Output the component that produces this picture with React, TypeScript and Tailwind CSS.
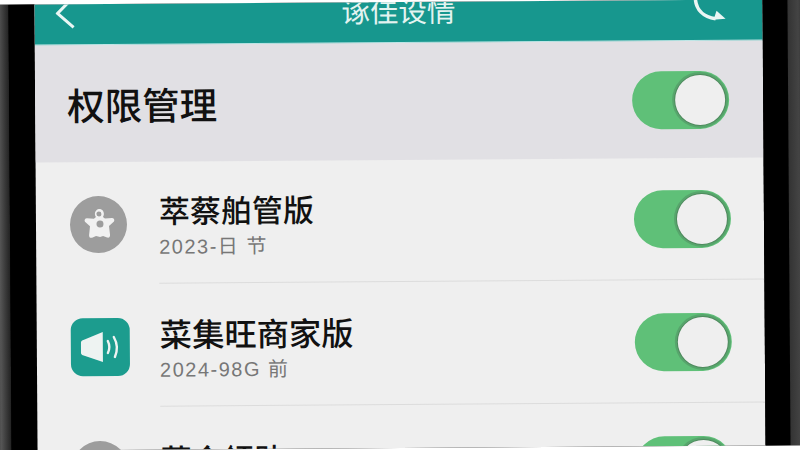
const CJK = "font-['Noto_Sans_CJK_SC','Noto_Sans',sans-serif]";

function Toggle({ className = "" }: { className?: string }) {
  return (
    <div className={`relative h-[58px] w-[97px] shrink-0 rounded-full bg-[#5fc078] ${className}`}>
      <div className="absolute right-[1px] top-[1px] h-[56px] w-[56px] rounded-full bg-[#57a56c]" />
      <div className="absolute right-[3px] top-[3px] h-[52px] w-[52px] rounded-full bg-[#4f8a5e]" />
      <div className="absolute right-[4px] top-[4px] h-[50px] w-[50px] rounded-full bg-[#efefef]" />
    </div>
  );
}

function PetIcon() {
  return (
    <div className="flex h-[57px] w-[57px] items-center justify-center rounded-full bg-[#9d9d9d]">
      <svg width="32" height="32" viewBox="0 0 32 32" fill="#f1f1f1" className="mb-[2px]">
        <path d="M16 1c3 0 5 2 5 5 0 1-.4 2-1 3l2 1.500 7-.5c2 0 3 2 2 3.500l-5 4.500 1 9c0 2-1 3-3 2.500l-4-1.500-3 1-4-1-4 1.500c-2 .5-3-.5-3-2.500l1-9-5-4.500c-1-1.500 0-3.500 2-3.500l7 .5 2-1.500c-.6-1-1-2-1-3 0-3 2-5 5-5z" />
        <circle cx="16" cy="6" r="2.500" fill="#9d9d9d" />
        <circle cx="17" cy="16" r="3.500" fill="#9d9d9d" />
      </svg>
    </div>
  );
}

function SpeakerIcon() {
  return (
    <div className="flex h-[58px] w-[59px] items-center justify-center rounded-[12px] bg-[#1c9c8e]">
      <svg width="40" height="32" viewBox="0 0 40 32" fill="none">
        <path d="M2 9 22 1v30L2 24c-1-.4-2-1-2-3v-9c0-2 1-2.600 2-3z" fill="#eef3f2" />
        <path d="M27 10c2 4 2 8 0 12" stroke="#eef3f2" strokeWidth="2.400" strokeLinecap="round" />
        <path d="M33 6c4 7 4 13 1 20" stroke="#eef3f2" strokeWidth="2.400" strokeLinecap="round" />
      </svg>
    </div>
  );
}

const ROWS = [
  { title: "萃蔡舶管版", sub: "2023-日 节", icon: <PetIcon />, height: "h-[122px]", titleSize: "text-[31px]", gap: "ml-[32px]" },
  { title: "菜集旺商家版", sub: "2024-98G 前", icon: <SpeakerIcon />, height: "h-[123px]", titleSize: "text-[32.300px]", gap: "ml-[30px]" },
];

export default function App() {
  return (
    <div className="h-[450px] w-[800px] overflow-hidden bg-white">
      <div className={`mt-[2px] -ml-[10px] flex h-[446px] w-[820px] rotate-[-0.4deg] bg-black ${CJK}`}>
        <div className="flex w-[46px] shrink-0">
          <div className="w-[20px] bg-gradient-to-r from-[#2c2c2c] via-[#555555] to-[#222222]" />
          <div className="flex-1 bg-black" />
        </div>

        <div className="flex h-full w-[728px] flex-col overflow-hidden bg-[#efefef]">
          <header className="grid h-[41px] shrink-0 grid-cols-[1fr_auto_1fr] items-start overflow-hidden border-b border-[#bfe6e6] bg-[#17978e]">
            <svg width="20" height="30" viewBox="0 0 20 30" fill="none" className="-mt-[4px] ml-[21px] justify-self-start">
              <path d="M15 0 2 13l16 14" stroke="#eaf6f4" strokeWidth="3" />
            </svg>
            <span className="-mt-[7px] text-[28.500px] leading-[30px] text-[#e3f3f0]">诼佳设情</span>
            <svg width="34" height="24" viewBox="0 0 34 24" fill="none" className="mr-[36px] justify-self-end">
              <path d="M3 0c1 9 7 17 20 19" stroke="#eaf6f4" strokeWidth="3.500" />
              <path d="M24 11l9 8-12 1z" fill="#eaf6f4" />
            </svg>
          </header>

          <section className="flex h-[117px] shrink-0 items-center justify-between bg-[#e1e0e4] pl-[32px] pr-[34px]">
            <h1 className="text-[37.500px] font-medium leading-[44px] text-[#111111]">权限管理</h1>
            <Toggle />
          </section>

          {ROWS.map((r) => (
            <div key={r.title} className={`flex ${r.height} shrink-0 items-center pl-[34px]`}>
              <div className="mt-[3px]">{r.icon}</div>
              <div className={`${r.gap} flex h-full flex-1 flex-col justify-center border-b border-[#dcdcdc] pt-[6px]`}>
                <div className={`${r.titleSize} font-medium leading-[36px] text-[#111111]`}>{r.title}</div>
                <div className="mt-[7px] font-['Liberation_Sans','Noto_Sans_CJK_SC',sans-serif] text-[20px] leading-[24px] tracking-[1.5px] text-[#777777]">
                  {r.sub}
                </div>
              </div>
              <Toggle className="-ml-[130px] mr-[33px]" />
            </div>
          ))}

          <div className="flex flex-1 items-start overflow-hidden pl-[34px] pr-[33px]">
            <div className="mt-[34px] h-[57px] w-[57px] shrink-0 rounded-full bg-[#9d9d9d]" />
            <div className="ml-[32px] mt-[34px] flex-1 text-[31px] font-medium leading-[36px] text-[#111111]">菜金領助</div>
            <Toggle className="mt-[33px]" />
          </div>
        </div>

        <div className="flex flex-1">
          <div className="w-[25px] bg-black" />
          <div className="flex-1 bg-gradient-to-r from-[#333333] via-[#444444] to-[#1e1e1e]" />
        </div>
      </div>
    </div>
  );
}
